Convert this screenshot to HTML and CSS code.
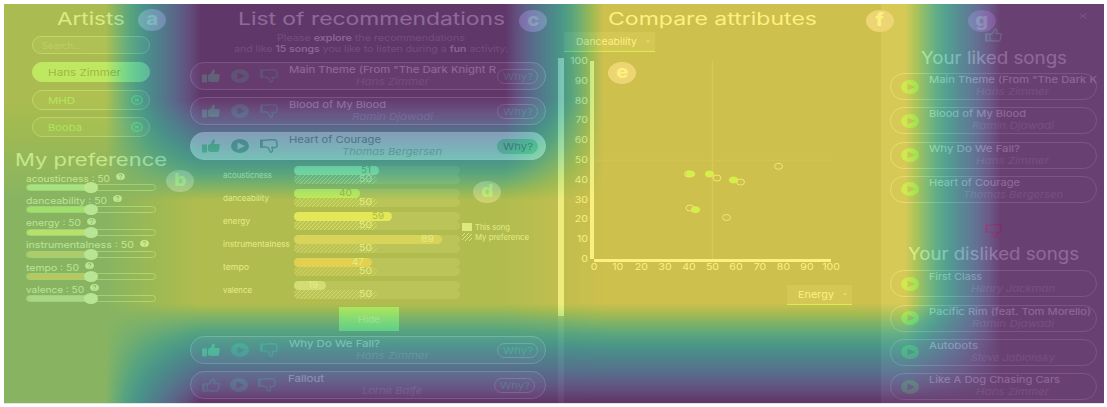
FILE: index.html
```html
<!DOCTYPE html>
<html lang="en">
<head>
<meta charset="utf-8">
<title>Music recommendations</title>
<link rel="stylesheet" href="styles.css">
</head>
<body>
<svg class="defs" width="0" height="0">
  <symbol id="up" viewBox="0 0 18 14" preserveAspectRatio="none"><path d="M0 5.500h5v8H0z"/><path d="M6 6 9 4.500 10.500 1Q11 0 12 .6 13.600 1.600 12 5h4.600q1.400 0 1.200 1.300l-.9 5.400Q16.400 13 15 13H8.500L6 12z"/></symbol>
  <symbol id="upline" viewBox="0 0 18 14" preserveAspectRatio="none"><path d="M0 6h2.600v7H0z"/><path class="ln" d="M.8 6h4.400v7H.8zM5.200 6.500 8.600 4.800 10.300 1.300Q11.500.3 12.500 1.800 12.800 3 11.800 5.400h4q1.500.1 1.300 1.400l-.9 4.900Q15.800 13 14.400 13H8.500L5.200 12z"/></symbol>
  <symbol id="down" viewBox="0 0 18 14" preserveAspectRatio="none"><path d="M0 1.200h2.800v6.800H0z"/><path class="ln" d="M5.200 7.600 4.400 8H.8V1.200H5.200L8.500.8H14.500Q16 .8 16.500 2l.7 4.500q0 1.700-1.400 1.900H12q.9 2.600.2 4.100-1.200 1.200-2.200.2L8.600 9.300 5.200 7.600"/></symbol>
  <symbol id="play" viewBox="0 0 18 14" preserveAspectRatio="none"><path fill-rule="evenodd" d="M9 0A9 7 0 0 1 9 14 9 7 0 0 1 9 0M6.500 3.500v7L14 7z"/></symbol>
  <symbol id="remove" viewBox="0 0 12 10" preserveAspectRatio="none"><ellipse class="ln" cx="6" cy="5" rx="5.200" ry="4.200"/><path class="ln" d="m4 3.500 4 3m0-3-4 3"/></symbol>
  <symbol id="help" viewBox="0 0 9 7" preserveAspectRatio="none"><ellipse cx="4.500" cy="3.500" rx="4.400" ry="3.500"/><path class="qm" d="M3.200 2.500Q3.400 1.400 4.600 1.500 6.200 1.700 5.700 2.900L4.600 3.900M4.600 4.900v.8"/></symbol>
</svg>
<main class="frame">
  <section class="side">
    <h1><span data-w="68">Artists</span></h1>
    <div class="search"><span data-w="39">Search...</span></div>
    <div class="artist on"><span data-w="73">Hans Zimmer</span></div>
    <div class="artist"><span data-w="27">MHD</span><svg><use href="#remove"/></svg></div>
    <div class="artist"><span data-w="34">Booba</span><svg><use href="#remove"/></svg></div>
    <h1 class="pref"><span data-w="152">My preference</span></h1>
    <div class="slider c1"><label><span data-w="84">acousticness : 50</span><svg><use href="#help"/></svg></label><div class="track"><i></i><b></b></div></div>
    <div class="slider c2"><label><span data-w="81">danceability : 50</span><svg><use href="#help"/></svg></label><div class="track"><i></i><b></b></div></div>
    <div class="slider c3"><label><span data-w="55">energy : 50</span><svg><use href="#help"/></svg></label><div class="track"><i></i><b></b></div></div>
    <div class="slider c4"><label><span data-w="108">instrumentalness : 50</span><svg><use href="#help"/></svg></label><div class="track"><i></i><b></b></div></div>
    <div class="slider c5"><label><span data-w="53">tempo : 50</span><svg><use href="#help"/></svg></label><div class="track"><i></i><b></b></div></div>
    <div class="slider c6"><label><span data-w="58">valence : 50</span><svg><use href="#help"/></svg></label><div class="track"><i></i><b></b></div></div>
  </section>

  <section class="recs">
    <h1><span data-w="267">List of recommendations</span></h1>
    <p><span data-w="188">Please <strong>explore</strong> the recommendations</span></p>
    <p><span data-w="274">and like <strong>15 songs</strong> you like to listen during a <strong>fun</strong> activity.</span></p>
    <div class="list">
      <article class="song"><svg class="thumb"><use href="#up"/></svg><svg class="dim"><use href="#play"/></svg><svg class="dim"><use href="#down"/></svg><div class="info"><span data-w="207">Main Theme (From "The Dark Knight R</span><em><span data-w="73">Hans Zimmer</span></em></div><button><span data-w="30">Why?</span></button></article>
      <article class="song"><svg class="thumb"><use href="#up"/></svg><svg class="dim"><use href="#play"/></svg><svg class="dim"><use href="#down"/></svg><div class="info"><span data-w="97">Blood of My Blood</span><em><span data-w="81">Ramin Djawadi</span></em></div><button><span data-w="30">Why?</span></button></article>
      <article class="song open"><svg class="thumb"><use href="#up"/></svg><svg class="dim"><use href="#play"/></svg><svg class="dim"><use href="#down"/></svg><div class="info"><span data-w="92">Heart of Courage</span><em><span data-w="100">Thomas Bergersen</span></em></div><button><span data-w="30">Why?</span></button></article>
      <div class="why">
        <div class="chart">
          <div class="attr c1"><label><span data-w="49">acousticness</span></label><div class="bars"><div><i class="val dk" style="width:51%"><span data-w="10">51</span></i></div><div><i class="mine"></i><span data-w="13">50</span></div></div></div>
          <div class="attr c2"><label><span data-w="46">danceability</span></label><div class="bars"><div><i class="val dk" style="width:40%"><span data-w="13">40</span></i></div><div><i class="mine"></i><span data-w="13">50</span></div></div></div>
          <div class="attr c3"><label><span data-w="27">energy</span></label><div class="bars"><div><i class="val dk" style="width:59%"><span data-w="12">59</span></i></div><div><i class="mine"></i><span data-w="13">50</span></div></div></div>
          <div class="attr c4"><label><span data-w="67">instrumentalness</span></label><div class="bars"><div><i class="val" style="width:89%"><span data-w="13">89</span></i></div><div><i class="mine"></i><span data-w="13">50</span></div></div></div>
          <div class="attr c5"><label><span data-w="26">tempo</span></label><div class="bars"><div><i class="val" style="width:47%"><span data-w="12">47</span></i></div><div><i class="mine"></i><span data-w="13">50</span></div></div></div>
          <div class="attr c6"><label><span data-w="29">valence</span></label><div class="bars"><div><i class="val" style="width:19%"><span data-w="10">19</span></i></div><div><i class="mine"></i><span data-w="13">50</span></div></div></div>
        </div>
        <div class="legend"><div><i></i><span data-w="35">This song</span></div><div><i class="hatch"></i><span data-w="54">My preference</span></div></div>
      </div>
      <div class="hide"><span data-w="22">Hide</span></div>
      <article class="song"><svg class="thumb vivid"><use href="#up"/></svg><svg class="dim"><use href="#play"/></svg><svg class="dim"><use href="#down"/></svg><div class="info"><span data-w="91">Why Do We Fall?</span><em><span data-w="73">Hans Zimmer</span></em></div><button><span data-w="30">Why?</span></button></article>
      <article class="song last"><svg class="dim"><use href="#upline"/></svg><svg class="dim"><use href="#play"/></svg><svg class="dim"><use href="#down"/></svg><div class="info"><span data-w="36">Fallout</span><em><span data-w="60">Lorne Balfe</span></em></div><button><span data-w="30">Why?</span></button></article>
    </div>
  </section>
  <div class="scroll"><i></i></div>

  <section class="compare">
    <h1><span data-w="209">Compare attributes</span></h1>
    <div class="select"><span data-w="61">Danceability</span><svg viewBox="0 0 4 3"><path d="M0 .5h4L2 2.500z"/></svg></div>
    <svg class="plot" width="300" height="221" viewBox="564 52 300 221">
      <path class="grid" d="M712.500 61V259"/><path class="grid faint" d="M594 160.500H831"/>
      <path class="axis" d="M590 61h4v198h237v3H594v-3h-4z"/>
      <g class="ylab"><text x="588" y="64">100</text><text x="588" y="84">90</text><text x="588" y="104">80</text><text x="588" y="123">70</text><text x="588" y="143">60</text><text x="588" y="163">50</text><text x="588" y="183">40</text><text x="588" y="203">30</text><text x="588" y="222">20</text><text x="588" y="242">10</text><text x="588" y="262">0</text></g>
      <g class="xlab"><text x="594" y="270">0</text><text x="617.700" y="270">10</text><text x="641.400" y="270">20</text><text x="665" y="270">30</text><text x="689" y="270">40</text><text x="712.500" y="270">50</text><text x="736" y="270">60</text><text x="760" y="270">70</text><text x="783.500" y="270">80</text><text x="807" y="270">90</text><text x="831" y="270">100</text></g>
      <g class="empty"><ellipse cx="688.500" cy="174" rx="4" ry="3"/><ellipse cx="717" cy="178" rx="4" ry="3"/><ellipse cx="740.500" cy="182" rx="4" ry="3"/><ellipse cx="778.500" cy="166.300" rx="4" ry="3"/><ellipse cx="690" cy="208" rx="4" ry="3"/><ellipse cx="726.500" cy="217.500" rx="4" ry="3"/></g>
      <g class="liked"><ellipse cx="690.500" cy="174" rx="4.200" ry="3"/><ellipse cx="709.500" cy="174" rx="4.200" ry="3"/><ellipse cx="733.500" cy="180" rx="4.200" ry="3"/><ellipse cx="695.500" cy="209.700" rx="4.200" ry="3"/></g>
    </svg>
    <div class="select energy"><span data-w="36">Energy</span><svg viewBox="0 0 4 3"><path d="M0 .5h4L2 2.500z"/></svg></div>
  </section>

  <section class="rated">
    <div class="close"><svg viewBox="0 0 8 6"><path d="m.5.5 7 5m0-5-7 5"/></svg></div>
    <svg class="mark"><use href="#upline"/></svg>
    <h1><span data-w="146">Your liked songs</span></h1>
    <article class="fav"><svg><use href="#play"/></svg><div class="info"><span data-w="168">Main Theme (From "The Dark K</span><em><span data-w="73">Hans Zimmer</span></em></div></article>
    <article class="fav"><svg><use href="#play"/></svg><div class="info"><span data-w="97">Blood of My Blood</span><em><span data-w="82">Ramin Djawadi</span></em></div></article>
    <article class="fav"><svg><use href="#play"/></svg><div class="info"><span data-w="91">Why Do We Fall?</span><em><span data-w="73">Hans Zimmer</span></em></div></article>
    <article class="fav"><svg><use href="#play"/></svg><div class="info"><span data-w="91">Heart of Courage</span><em><span data-w="100">Thomas Bergersen</span></em></div></article>
    <svg class="mark no"><use href="#down"/></svg>
    <h1><span data-w="171">Your disliked songs</span></h1>
    <article class="fav"><svg><use href="#play"/></svg><div class="info"><span data-w="53">First Class</span><em><span data-w="84">Henry Jackman</span></em></div></article>
    <article class="fav"><svg><use href="#play"/></svg><div class="info"><span data-w="162">Pacific Rim (feat. Tom Morello)</span><em><span data-w="82">Ramin Djawadi</span></em></div></article>
    <article class="fav"><svg><use href="#play"/></svg><div class="info"><span data-w="49">Autobots</span><em><span data-w="84">Steve Jablonsky</span></em></div></article>
    <article class="fav"><svg><use href="#play"/></svg><div class="info"><span data-w="131">Like A Dog Chasing Cars</span><em><span data-w="73">Hans Zimmer</span></em></div></article>
  </section>

  <div class="badge a"><span>a</span></div><div class="badge b"><span>b</span></div><div class="badge c"><span>c</span></div><div class="badge d"><span>d</span></div><div class="badge e"><span>e</span></div><div class="badge f"><span>f</span></div><div class="badge g"><span>g</span></div>
  <canvas class="heat" width="1100" height="400"></canvas>
</main>
<script src="app.js"></script>
</body>
</html>
```
FILE: styles.css
```css
* { box-sizing: border-box; }
body { margin: 0; background: #fff; font-family: Inter, "Open Sans", sans-serif; font-size: 9px; color: #fff; }
.defs { position: absolute; }
.frame { position: relative; margin: 4px; width: 1100px; height: 400px; overflow: hidden; background: #888; border-bottom: 1px solid #e4e4e4; display: grid; grid-template-columns: 182px 372px 6px 317px 223px; }
h1 { margin: 0; font-size: 17px; font-weight: 400; line-height: 22px; height: 22px; display: flex; justify-content: center; }
section { min-width: 0; height: 400px; }
[data-w] { display: inline-block; white-space: nowrap; transform-origin: left center; }
.ln { fill: none; stroke: currentColor; stroke-width: 1.5; }
svg { fill: currentColor; flex: none; }
.c1 { --c: #c0fbd9; } .c2 { --c: #c2f5a0; } .c3 { --c: #fff39b; } .c4 { --c: #e7c09f; } .c5 { --c: #ffb884; } .c6 { --c: #ddd6e2; }

/* artists and sliders */
.side { padding-top: 4px; }
.side h1 { padding-right: 8px; }
.search, .artist { margin-left: 28px; width: 118px; border: 1px solid #c4c8bc; border-radius: 12px; display: flex; align-items: center; }
.search { height: 18px; margin-top: 6px; padding-left: 9px; color: #b8b8b8; font-size: 9px; background: #949490; }
.artist { height: 20px; margin-top: 8px; padding: 0 6px 0 15px; justify-content: space-between; color: #a6f09c; font-size: 9.500px; background: #94948c; }
.artist:nth-of-type(3) { margin-top: 8px; }
.artist:nth-of-type(4) { margin-top: 7px; }
.artist.on { background: #baf4b0; border-color: #c4f4b4; color: #707c64; }
.artist svg { width: 12px; height: 10px; color: #8ce4a4; }
.pref { margin-top: 12px; }
.slider { height: 22.3px; padding-left: 22px; }
.pref + .slider { margin-top: 1px; }
.slider label { height: 12px; display: flex; align-items: center; gap: 6px; font-size: 9px; line-height: 12px; padding-top: 1px; }
.slider label svg { width: 9px; height: 7px; margin-bottom: 4px; }
.qm { fill: none; stroke: #888; stroke-width: 1; }
.track { position: relative; width: 130px; height: 7px; border: 1px solid #c2d0b8; border-radius: 4px; }
.track i { display: block; width: 64px; height: 5px; background: var(--c); border-radius: 4px 0 0 4px; }
.track b { position: absolute; left: 57px; top: -3px; width: 14px; height: 11px; border-radius: 50%; background: #fff; }

/* recommendations */
.recs { padding: 4px 0 0 4px; }
.recs p { margin: 0; height: 11px; line-height: 11px; font-size: 8.800px; color: #bcb8bc; display: flex; justify-content: center; padding-right: 6px; }
.recs h1 { margin-bottom: 2px; padding-right: 6px; }
.recs strong { font-weight: 500; color: #fafafa; }
.list { margin-top: 8px; }
.song { width: 356px; height: 28px; margin-bottom: 7px; border: 1px solid #d0c8d2; border-radius: 14px; background: #989296; display: flex; align-items: center; padding-left: 11px; padding-right: 7px; }
.song > svg { width: 18px; height: 14px; margin-right: 11px; }
.song .thumb { color: #8cecac; }
.song .vivid { color: #8cfab0; }
.song .dim { color: #86c8a8; }
.info { height: 26px; display: flex; flex-direction: column; align-items: flex-start; line-height: 12px; font-size: 9.500px; min-width: 0; padding-top: 1px; }
.song .info { width: 207px; }
.info em { display: block; width: 100%; text-align: center; color: #bcb8be; font-size: 9.500px; }
.song button { width: 41px; height: 15px; margin-left: 2px; padding: 0; border: 1px solid #d0c8d2; border-radius: 9px; background: transparent; color: #8cd4ac; font: 9.500px/11px Inter, sans-serif; display: flex; justify-content: center; align-items: center; }
.song.open { background: #f6f6f8; border-color: #fff; margin-bottom: 0; }
.song.open .info { color: #777; }
.song.open em { color: #aaa; }
.song.open .thumb { color: #78d48c; }
.song.open .dim { color: #78ac90; }
.song.open button { background: #92dca6; border-color: #92dca6; color: #606a64; }
.song.last > svg { margin-right: 10px; margin-left: 0; }
.song.last .info { margin-left: 2px; }
.song.last button { margin-left: -1px; }
.why { height: 147px; padding: 6px 0 0 33px; display: flex; align-items: flex-start; }
.attr { height: 23px; display: flex; }
.attr label { width: 71px; line-height: 19px; font-size: 8px; }
.bars { width: 166px; }
.bars > div { position: relative; height: 9px; background: #9c9c9c; border-radius: 5px; margin-bottom: 0; font-size: 8.500px; line-height: 9px; }
.bars i { display: block; height: 9px; border-radius: 5px; font-style: normal; }
.bars .val { background: var(--c); text-align: right; padding-right: 8px; color: #fff; }
.bars .dk { color: #808074; }
.bars .mine { width: 50%; background: repeating-linear-gradient(135deg, transparent 0 1.900px, var(--c) 1.900px 2.828px); opacity: .8; }
.bars > div > span { position: absolute; left: 65px; top: 0; }
.legend { padding: 56px 0 0 2px; font-size: 7.500px; }
.legend div { display: flex; align-items: center; height: 10px; gap: 3px; }
.legend i { width: 10px; height: 8px; background: #f6f6f6; }
.legend .hatch { background: repeating-linear-gradient(135deg, transparent 0 1.900px, #eee 1.900px 2.828px); }
.hide { width: 60px; height: 24px; margin: 0 0 5px 149px; background: #a0eea0; color: #e8ffe6; display: flex; align-items: center; justify-content: center; font-size: 9.500px; }
.scroll { margin-top: 54px; background: #9e9e9e; }
.scroll i { display: block; height: 258px; background: #f8f8f8; }

/* scatter plot */
.compare { padding-top: 4px; }
.compare h1 { padding-right: 21px; }
.select { width: 91px; height: 20px; margin-top: 2px; background: #9a9a9a; border-bottom: 1px solid #a0ff88; display: flex; align-items: center; justify-content: space-between; padding: 0 5px 0 12px; font-size: 9.500px; }
.select svg { width: 4px; height: 3px; color: #a0ff88; }
.select.energy { width: 65px; margin: 12px 0 0 223px; padding-left: 11px; }
.plot { display: block; font-size: 9px; }
.plot text { fill: #fff; }
.grid { fill: none; stroke: #9e9e9e; stroke-width: 1.5; }
.faint { stroke: #929292; }
.axis { fill: #fff; }
.ylab { text-anchor: end; } .xlab { text-anchor: middle; }
.ylab text, .xlab text { transform-box: fill-box; transform: scaleX(1.18); }
.ylab text { transform-origin: right center; } .xlab text { transform-origin: center; }
.empty { fill: none; stroke: #eee; stroke-width: .9; }
.liked { fill: #96ff80; stroke: #d0f8a0; stroke-width: .6; }

/* rated songs */
.rated { background: #9e9e9e; padding-left: 9px; }
.close { height: 24px; padding: 9px 17px 0 0; text-align: right; line-height: 0; }
.close svg { width: 8px; height: 6px; fill: none; stroke: #ccc; }
.rated .mark { display: block; width: 17px; height: 14px; margin-left: 95px; color: #b0e4c0; }
.rated h1 { padding-right: 7px; margin-top: 5px; margin-bottom: 4px; }
.fav { width: 207px; height: 27px; margin-bottom: 7.300px; border: 1px solid #d2ccd4; border-radius: 14px; display: flex; align-items: center; }
.fav > svg { width: 18px; height: 14px; margin: 0 10px 0 10px; color: #90ec88; }
.fav .info { height: 25px; width: 167px; padding-top: 0; }
.fav em { color: #c4bec8; }
.rated .no { color: #f0607c; margin-top: 21px; }
.rated .no + h1 { margin-top: 5px; margin-bottom: 5.500px; }

/* section markers */
.badge { position: absolute; width: 28px; height: 22px; border-radius: 50%; background: #dabce8; font-size: 18px; font-weight: 800; line-height: 20px; text-align: center; color: #fff; }
.badge span { display: inline-block; transform: scaleX(1.12); }
.a { left: 134px; top: 5px; } .b { left: 162px; top: 166px; } .c { left: 515px; top: 6px; } .d { left: 469px; top: 177px; } .e { left: 604px; top: 58px; } .f { left: 862px; top: 6px; } .g { left: 964px; top: 6px; }
.badge.b, .badge.d { background: #d0bcd8; }
.badge.b span, .badge.d span { color: #dcffc8; }
.badge.b, .badge.d { font-size: 17px; }
.heat { position: absolute; left: 0; top: 0; opacity: .59; pointer-events: none; }
```
FILE: app.js
```js
document.querySelectorAll('[data-w]').forEach(function (el) {
  var w = +el.dataset.w, own = el.getBoundingClientRect().width;
  el.style.transform = 'scaleX(' + w / own + ')';
  el.style.marginRight = (w - own) + 'px';
});

// Attention heatmap: bilinear field through a viridis ramp.
(function () {
  var xs = [0, 101, 196, 501, 599, 901, 996, 1100];
  var ys = [0, 96, 196, 299, 396, 400];
  var grid = [
    [.91, .91, 0, 0, 1, 1, 0, 0],
    [.91, .91, 0, 0, 1, 1, 0, 0],
    [.82, .82, .93, .93, 1, 1, 0, 0],
    [.82, .82, .93, .93, 1, 1, 0, 0],
    [.82, .82, 0, 0, 0, 0, 0, 0],
    [.82, .82, 0, 0, 0, 0, 0, 0]
  ];
  var ramp = [[68, 1, 84], [72, 40, 120], [62, 74, 137], [49, 104, 142], [38, 130, 142], [31, 158, 137], [53, 183, 121], [109, 205, 89], [180, 222, 44], [253, 231, 37]];
  function locate(stops, p) {
    var i = 0;
    while (i < stops.length - 2 && p >= stops[i + 1]) i++;
    return [i, (p - stops[i]) / (stops[i + 1] - stops[i])];
  }
  var ctx = document.querySelector('.heat').getContext('2d');
  var img = ctx.createImageData(1100, 400);
  for (var y = 0, k = 0; y < 400; y++) {
    var q = locate(ys, y), r0 = grid[q[0]], r1 = grid[q[0] + 1];
    for (var x = 0; x < 1100; x++, k += 4) {
      var p = locate(xs, x), i = p[0], t = p[1];
      var upper = r0[i] + (r0[i + 1] - r0[i]) * t, lower = r1[i] + (r1[i + 1] - r1[i]) * t;
      var v = Math.max(0, Math.min(1, upper + (lower - upper) * q[1])) * 9, j = Math.min(8, Math.floor(v)), f = v - j;
      for (var c = 0; c < 3; c++) img.data[k + c] = ramp[j][c] + (ramp[j + 1][c] - ramp[j][c]) * f;
      img.data[k + 3] = 255;
    }
  }
  ctx.putImageData(img, 0, 0);
})();
```
